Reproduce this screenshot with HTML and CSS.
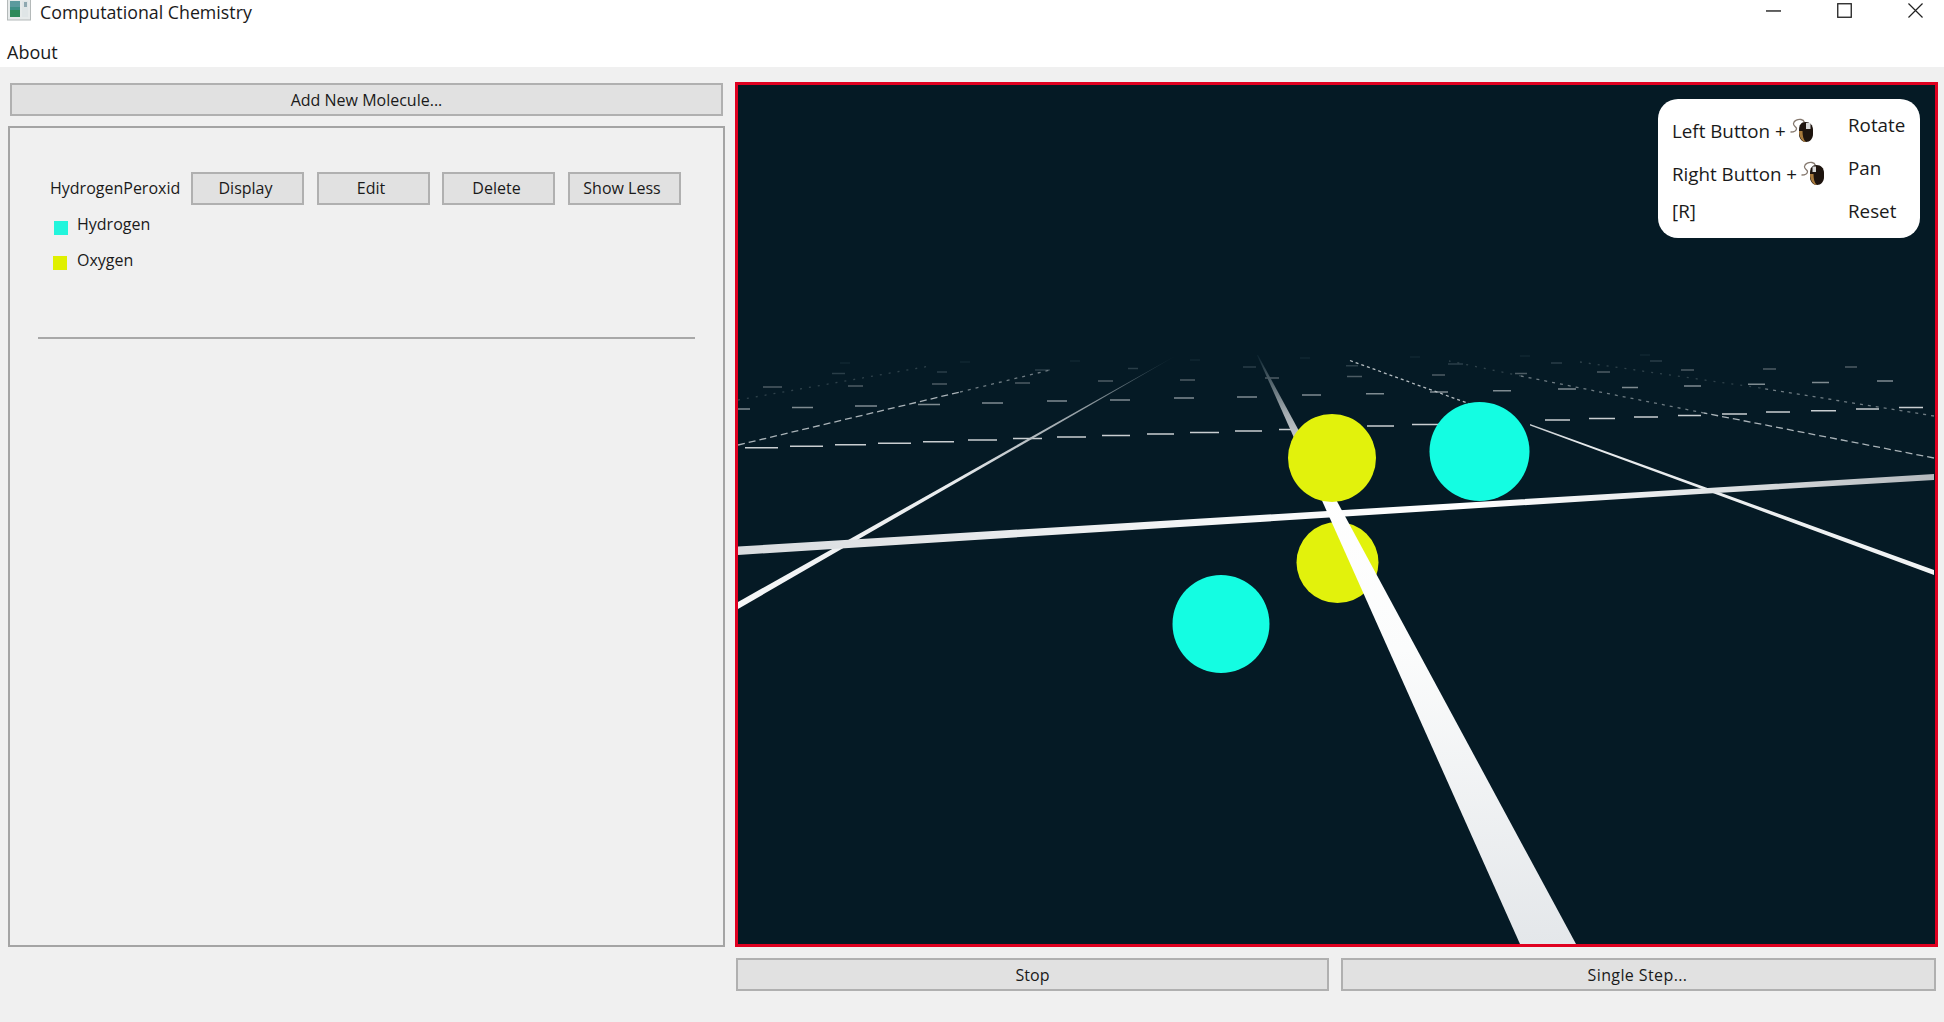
FILE: index.html
```html
<!DOCTYPE html>
<html lang="en">
<head>
<meta charset="utf-8">
<title>Computational Chemistry</title>
<link rel="stylesheet" href="styles.css">
</head>
<body>
<div class="window">
  <header class="titlebar">
    <div class="title-left">
      <svg class="app-icon" viewBox="0 0 24 21" aria-hidden="true">
        <rect x="0.5" y="-2" width="23" height="22" fill="#e6eaea" stroke="#b4b9b9"/>
        <rect x="3" y="1" width="10" height="16" fill="#3f8f86"/>
        <rect x="3" y="1" width="10" height="6" fill="#5c9a9e"/>
        <rect x="3" y="10" width="10" height="7" fill="#2e8a5a"/>
        <rect x="15" y="1" width="6" height="16" fill="#dfe5e6"/>
        <rect x="17" y="2" width="3" height="5" fill="#8fa8b0"/>
      </svg>
      <span class="title-text">Computational Chemistry</span>
    </div>
    <div class="window-controls">
      <svg class="win-btn" viewBox="0 0 16 16" aria-hidden="true"><path d="M0 8.500H16" stroke="#222" stroke-width="1.500"/></svg>
      <svg class="win-btn" viewBox="0 0 16 16" aria-hidden="true"><rect x="0.800" y="0.800" width="14.400" height="14.400" fill="none" stroke="#222" stroke-width="1.400"/></svg>
      <svg class="win-btn" viewBox="0 0 16 16" aria-hidden="true"><path d="M0.500 0.500L15.500 15.500M15.500 0.500L0.500 15.500" stroke="#222" stroke-width="1.300"/></svg>
    </div>
  </header>
  <nav class="menubar"><span class="menu-item">About</span></nav>

  <main class="content">
    <section class="left-column">
      <button class="btn btn-wide">Add New Molecule...</button>
      <div class="group-box">
        <div class="molecule-row">
          <span class="molecule-name">HydrogenPeroxid</span>
          <button class="btn btn-row">Display</button>
          <button class="btn btn-row">Edit</button>
          <button class="btn btn-row">Delete</button>
          <button class="btn btn-row">Show Less</button>
        </div>
        <ul class="atom-list">
          <li class="atom"><span class="swatch swatch-h"></span><span class="atom-name">Hydrogen</span></li>
          <li class="atom atom-o"><span class="swatch swatch-o"></span><span class="atom-name">Oxygen</span></li>
        </ul>
        <hr class="separator">
      </div>
    </section>

    <section class="right-column">
      <div class="viewer">
        <svg class="scene" viewBox="738 85 1197 859" preserveAspectRatio="none" aria-hidden="true">
          <defs>
            <linearGradient id="gH" gradientUnits="userSpaceOnUse" x1="738" y1="0" x2="1934" y2="0">
              <stop offset="0" stop-color="#d9dcdf"/>
              <stop offset="0.4" stop-color="#f4f6f7"/>
              <stop offset="0.6" stop-color="#ffffff"/>
              <stop offset="0.8" stop-color="#e4e7e9"/>
              <stop offset="1" stop-color="#b4b9bd"/>
            </linearGradient>
            <linearGradient id="gL" gradientUnits="userSpaceOnUse" x1="738" y1="605" x2="1177" y2="355">
              <stop offset="0" stop-color="#f6f7f8"/>
              <stop offset="0.5" stop-color="#e8ebed"/>
              <stop offset="0.8" stop-color="#8d989e"/>
              <stop offset="1" stop-color="#0c2430"/>
            </linearGradient>
            <linearGradient id="gR" gradientUnits="userSpaceOnUse" x1="1934" y1="573" x2="1344" y2="358">
              <stop offset="0" stop-color="#f2f4f5"/>
              <stop offset="0.6" stop-color="#e6e9eb"/>
              <stop offset="1" stop-color="#44555e"/>
            </linearGradient>
            <linearGradient id="gB" gradientUnits="userSpaceOnUse" x1="0" y1="355" x2="0" y2="944">
              <stop offset="0" stop-color="#0c2430"/>
              <stop offset="0.1" stop-color="#a5adb2"/>
              <stop offset="0.22" stop-color="#ffffff"/>
              <stop offset="0.5" stop-color="#fbfcfc"/>
              <stop offset="1" stop-color="#e4e7ea"/>
            </linearGradient>
          </defs>

          <path class="dash d1" d="M745 447.700H778M790 446.300H823M835 444.700H866M878 443.300H911M923 441.700H954M968 440H997M1013 438.500H1042M1057 437H1086M1102 435.500H1130M1147 434H1174M1190 432.500H1219M1235 431H1262M1279 429.500H1296M1367 426H1394M1412 424.500H1439M1545 420H1570M1589 418.500H1615M1634 417H1658M1678 415.500H1701M1722 414H1747M1766 412H1790M1811 410.700H1836M1856 409H1879M1899 407.500H1923"/>
          <path class="dash d2" d="M738 409H750M792 407.500H813M855 406H877M918 404.500H940M982 403H1003M1047 401H1067M1110 400H1130M1174 398H1194M1237 397H1257M1302 395H1321M1366 393.700H1384M1430 392H1448M1493 390.700H1511M1558 389H1576M1622 387.500H1638M1684 386H1701M1748 384.300H1765M1812 382.600H1829M1877 381H1893"/>
          <path class="dash d3" d="M763 387H782M848 386H863M932 384H947M1015 383H1030M1098 381H1113M1180 380H1195M1265 378H1279M1347 376.500H1362M1432 375H1445M1515 373.500H1527M1597 372H1610M1681 370H1694M1763 369H1776M1845 367H1857"/>
          <path class="dash d4" d="M832 373.500H845M937 372H947M1035 370H1050M1128 368.500H1138M1243 367H1256M1346 365.700H1358M1448 364H1463M1551 363H1562M1650 361H1662"/>
          <path class="dash d5" d="M840 363H850M960 362H970M1070 361H1080M1190 360H1200M1300 358H1310M1410 357H1420M1520 356H1530M1640 355H1650"/>

          <path class="dots dots-a" d="M738 445L960 392"/>
          <path class="dots dots-b" d="M960 392L1050 370"/>
          <path class="dots dots-c" d="M738 400L930 366"/>
          <path class="dots dots-a" d="M1934 458L1704 413"/>
          <path class="dots dots-b" d="M1704 413L1521 376"/>
          <path class="dots dots-c" d="M1521 376L1449 361"/>
          <path class="dots dots-b" d="M1934 416L1760 388"/>
          <path class="dots dots-c" d="M1760 388L1580 362"/>

          <polygon fill="url(#gL)" points="738,602 1177,355 738,609"/>
          <polygon fill="url(#gR)" points="1934,570 1706,487.500 1530,424 1530,425.500 1706,490.500 1934,575"/>
          <path class="dots dots-r" d="M1350 360.500L1470 404"/>
          <polygon fill="url(#gH)" points="738,546.500 1700,488.500 1934,474 1934,480 1700,494 738,555"/>

          <ellipse class="oxygen" cx="1337.500" cy="562.500" rx="41" ry="40.500"/>
          <ellipse class="hydrogen" cx="1221" cy="624" rx="48.500" ry="49"/>
          <polygon fill="url(#gB)" points="1257,355 1258,355 1576,944 1520,944"/>
          <ellipse class="oxygen" cx="1332" cy="458" rx="44" ry="44"/>
          <ellipse class="hydrogen" cx="1479.500" cy="451.500" rx="50" ry="49.500"/>
        </svg>

        <div class="help">
          <div class="help-keys">
            <div class="help-key"><span>Left Button +</span><svg class="mouse" viewBox="0 0 24 24" aria-hidden="true">
                <path d="M0.500 14C3.500 14 6.500 13 6.500 10.500C6.500 8.500 3 8 3.500 5.500C4 2.500 8 1 11 1.500C13 1.800 14 3 14.500 4.500" fill="none" stroke="#85786e" stroke-width="1.300"/>
                <path d="M9 12C9 7 11 4 15.500 4C20 4 23 7 23 12V16C23 20.500 20 24 16 24C12 24 9 20.500 9 16Z" fill="#1e140e"/>
                <path d="M16 5H20.500V11H16Z" fill="#d8d8d8"/>
                <path d="M9 13C9 19 12 24 16 24C13.500 22 12.500 18 12.500 13Z" fill="#a87a3c"/>
              </svg></div>
            <div class="help-key help-key-right"><span>Right Button +</span><svg class="mouse" viewBox="0 0 24 24" aria-hidden="true">
                <path d="M0.500 14C3.500 14 6.500 13 6.500 10.500C6.500 8.500 3 8 3.500 5.500C4 2.500 8 1 11 1.500C13 1.800 14 3 14.500 4.500" fill="none" stroke="#85786e" stroke-width="1.300"/>
                <path d="M9 12C9 7 11 4 15.500 4C20 4 23 7 23 12V16C23 20.500 20 24 16 24C12 24 9 20.500 9 16Z" fill="#1e140e"/>
                <path d="M11.500 5.500H15V11H11.500Z" fill="#d8d8d8"/>
                <path d="M9 13C9 19 12 24 16 24C13.500 22 12.500 18 12.500 13Z" fill="#a87a3c"/>
              </svg></div>
            <div class="help-key help-key-r">[R]</div>
          </div>
          <div class="help-actions">
            <div>Rotate</div>
            <div>Pan</div>
            <div>Reset</div>
          </div>
        </div>
      </div>
      <div class="sim-buttons">
        <button class="btn btn-sim">Stop</button>
        <button class="btn btn-sim btn-step">Single Step...</button>
      </div>
    </section>
  </main>
</div>
</body>
</html>
```

FILE: styles.css
```css
* { box-sizing: border-box; }

html, body {
  margin: 0;
  height: 100%;
  overflow: hidden;
}

body {
  font-family: "Open Sans", "Noto Sans", "Liberation Sans", sans-serif;
  font-size: 16px;
  color: #1a1a1a;
  background: #f0f0f0;
}

.window {
  display: flex;
  flex-direction: column;
  height: 1022px;
}

.titlebar {
  height: 24px;
  background: #fff;
  display: flex;
  justify-content: space-between;
  align-items: flex-start;
}

.title-left {
  display: flex;
  align-items: flex-start;
  padding-left: 7px;
}

.app-icon {
  width: 24px;
  height: 21px;
  display: block;
}

.title-text {
  margin-left: 9px;
  font-size: 17.800px;
  line-height: 24px;
}

.window-controls {
  display: flex;
  padding: 3px 21px 0 0;
  gap: 56px;
}

.win-btn {
  width: 15px;
  height: 15px;
  display: block;
}

.menubar {
  height: 42.500px;
  background: #fff;
  padding: 16px 0 0 7px;
}

.menu-item {
  font-size: 18px;
  line-height: 24px;
  display: block;
}

.content {
  display: flex;
  flex: 1;
  min-height: 0;
  padding: 15.500px 6px 0 8px;
  gap: 10px;
}

.left-column {
  width: 717px;
  height: 865px;
  display: flex;
  flex-direction: column;
  gap: 10px;
  flex: none;
}

.right-column {
  flex: 1;
  display: flex;
  flex-direction: column;
  gap: 11px;
}

.btn {
  font: inherit;
  font-size: 16px;
  color: #1a1a1a;
  background: #e1e1e1;
  border: 2px solid #b0b0b0;
  padding: 0;
  height: 33px;
}

.btn-wide {
  width: 713px;
  margin: 1px 0 0 2px;
  flex: none;
}

.group-box {
  flex: 1;
  border: 2px solid #a4a4a4;
  background: #f0f0f0;
  padding: 44px 28px 0 28px;
}

.molecule-row {
  display: flex;
  align-items: center;
  height: 32px;
  padding-left: 12px;
}

.molecule-name {
  width: 141px;
  white-space: nowrap;
}

.btn-row {
  width: 113px;
  height: 33px;
  margin-right: 12.500px;
  padding-right: 4px;
  flex: none;
}

.atom-list {
  list-style: none;
  margin: 0;
  padding: 0 0 0 15px;
}

.atom {
  display: flex;
  align-items: flex-start;
  height: 36px;
  margin-top: 6px;
}

.atom-o {
  margin-top: -1px;
}

.swatch {
  width: 14px;
  height: 14px;
  margin-top: 11px;
  flex: none;
}

.swatch-h { background: #22f5dc; margin-left: 1px; }
.swatch-o { background: #e0f000; margin-top: 11px; }
.swatch-o + .atom-name { margin-left: 10px; margin-top: 3px; }

.atom-name {
  margin-left: 9px;
  margin-top: 2px;
  line-height: 24px;
}

.separator {
  border: 0;
  height: 2px;
  background: #a8a8a8;
  margin: 56px 0 0 0;
}

.viewer {
  position: relative;
  height: 865px;
  border: 3px solid #e00020;
  background: #051a25;
  overflow: hidden;
}

.scene {
  display: block;
  width: 100%;
  height: 100%;
}

.dash { fill: none; stroke-width: 1.500; }
.d1 { stroke: #c9ced1; }
.d2 { stroke: #7f8b91; }
.d3 { stroke: #4d5c64; }
.d4 { stroke: #2a3e48; }
.d5 { stroke: #112732; }

.dots { fill: none; stroke-width: 1.300; }
.dots-a { stroke: #aab3b8; stroke-dasharray: 7 4; }
.dots-b { stroke: #6f7c83; stroke-dasharray: 3 5; }
.dots-c { stroke: #2f424b; stroke-dasharray: 2 7; }
.dots-r { stroke: #b5bdc1; stroke-dasharray: 3 3; }

.oxygen { fill: #e2f20c; }
.hydrogen { fill: #14fde2; }

.help {
  position: absolute;
  top: 14px;
  right: 15px;
  width: 262px;
  height: 139px;
  background: #fff;
  border-radius: 20px;
  display: flex;
  font-size: 18.800px;
  color: #1a1a1a;
}

.help-keys {
  width: 190px;
  flex: none;
  padding: 18px 0 0 14px;
}

.help-key {
  display: flex;
  align-items: flex-start;
  height: 43px;
  line-height: 28px;
  white-space: nowrap;
}

.help-key-right { height: 37px; }

.mouse {
  width: 24px;
  height: 24px;
  margin: 1px 0 0 4px;
  flex: none;
}

.help-actions {
  padding-top: 5px;
  line-height: 43px;
}

.help-actions div { height: 43px; }

.sim-buttons {
  display: flex;
  gap: 12px;
  padding: 0 2px 0 1px;
}

.btn-sim {
  flex: 1;
  height: 33px;
}

.btn-step { letter-spacing: 0.400px; padding-right: 2px; }
```
